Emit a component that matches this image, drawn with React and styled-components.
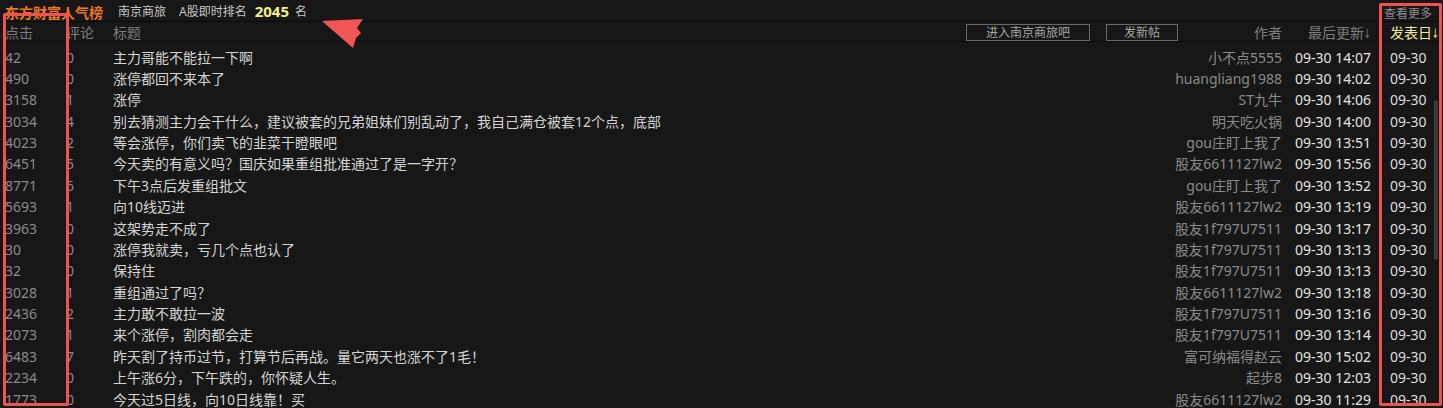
import styled, { createGlobalStyle } from 'styled-components'

const Global = createGlobalStyle`
  html, body {
    margin: 0;
    padding: 0;
    background: #171717;
  }
  body {
    font-family: "Noto Sans", "Noto Sans CJK SC", sans-serif;
    font-size: 14px;
    overflow: hidden;
  }
`

const Page = styled.div`
  position: relative;
  width: 1443px;
  height: 408px;
  overflow: hidden;
  background: #171717;
`

const TopBar = styled.div`
  display: flex;
  align-items: center;
  height: 21px;
  padding-left: 5px;
  border-bottom: 1px solid #0b0b0b;
  overflow: hidden;
  white-space: nowrap;
`

const Brand = styled.span`
  color: #ee7628;
  font-weight: 700;
  font-size: 14px;
  line-height: 14px;
  margin-top: 4px;
`

const Info = styled.span`
  color: #c6c6c6;
  font-size: 12px;
  margin-left: ${p => p.gap || 0}px;
`

const Rank = styled.span`
  color: #f3ef8c;
  font-weight: 700;
  font-size: 15px;
  margin-left: 8px;
`

const More = styled.span`
  margin-left: auto;
  margin-right: 11px;
  margin-top: 5px;
  color: #8e8e8e;
  font-size: 12px;
`

const Grid = styled.div`
  display: grid;
  grid-template-columns: 61px 47px 1fr 200px 108px 53px;
  padding-left: 5px;
  white-space: nowrap;
`

const Header = styled(Grid)`
  height: 19px;
  align-items: center;
  border-bottom: 1px solid #0b0b0b;
  color: #7d7d7d;
  font-size: 14px;
`

const HeadWide = styled.div`
  grid-column: 3 / 5;
  display: flex;
  align-items: center;
`

const Btn = styled.div`
  width: ${p => p.w}px;
  height: 15px;
  margin-left: ${p => p.gap || 0}px;
  border: 1px solid #6a6a6a;
  color: #a6a6a6;
  font-size: 12px;
  line-height: 15px;
  text-align: center;
`

const Author = styled.span`
  margin-left: 76px;
`

const SortHead = styled.div`
  text-align: right;
  padding-right: 19px;
`

const ActiveHead = styled.div`
  color: #ecea98;
`

const Down = styled.span`
  display: inline-block;
  width: 7px;
  font-family: "DejaVu Sans", sans-serif;
  font-size: 13px;
  transform: scaleX(0.6);
  transform-origin: left center;
`

const List = styled.div`
  position: relative;
  padding-top: 4.5px;
`

const Row = styled(Grid)`
  height: 21.375px;
  line-height: 21.375px;
`

const Num = styled.div`
  color: #8b8b8b;
`

const Title = styled.div`
  color: #d4d4d4;
  overflow: hidden;
`

const By = styled.div`
  color: #8a8a8a;
  text-align: right;
`

const Stamp = styled.div`
  color: #e4e4e4;
  padding-left: 13px;
`

const Day = styled.div`
  color: #dedede;
`

const Scroll = styled.div`
  position: absolute;
  right: 5px;
  top: ${p => p.top}px;
  width: 4px;
  height: ${p => p.h}px;
  background: #3a3a3a;
  border-radius: 2px;
`

const Frame = styled.div`
  position: absolute;
  left: ${p => p.x}px;
  top: ${p => p.y}px;
  width: ${p => p.w}px;
  height: ${p => p.h}px;
  border: 3px solid #f05252;
  border-radius: 2px;
  box-sizing: border-box;
  pointer-events: none;
`

const Arrow = styled.svg`
  position: absolute;
  left: 318px;
  top: 15px;
`

const rows = [
  ['42', '0', '主力哥能不能拉一下啊', '小不点5555', '09-30 14:07'],
  ['490', '0', '涨停都回不来本了', 'huangliang1988', '09-30 14:02'],
  ['3158', '1', '涨停', 'ST九牛', '09-30 14:06'],
  ['3034', '4', '别去猜测主力会干什么，建议被套的兄弟姐妹们别乱动了，我自己满仓被套12个点，底部', '明天吃火锅', '09-30 14:00'],
  ['4023', '2', '等会涨停，你们卖飞的韭菜干瞪眼吧', 'gou庄盯上我了', '09-30 13:51'],
  ['6451', '5', '今天卖的有意义吗？国庆如果重组批准通过了是一字开？', '股友6611127lw2', '09-30 15:56'],
  ['8771', '6', '下午3点后发重组批文', 'gou庄盯上我了', '09-30 13:52'],
  ['5693', '1', '向10线迈进', '股友6611127lw2', '09-30 13:19'],
  ['3963', '0', '这架势走不成了', '股友1f797U7511', '09-30 13:17'],
  ['30', '0', '涨停我就卖，亏几个点也认了', '股友1f797U7511', '09-30 13:13'],
  ['32', '0', '保持住', '股友1f797U7511', '09-30 13:13'],
  ['3028', '1', '重组通过了吗？', '股友6611127lw2', '09-30 13:18'],
  ['2436', '2', '主力敢不敢拉一波', '股友1f797U7511', '09-30 13:16'],
  ['2073', '1', '来个涨停，割肉都会走', '股友1f797U7511', '09-30 13:14'],
  ['6483', '7', '昨天割了持币过节，打算节后再战。量它两天也涨不了1毛！', '富可纳福得赵云', '09-30 15:02'],
  ['2234', '0', '上午涨6分，下午跌的，你怀疑人生。', '起步8', '09-30 12:03'],
  ['1773', '0', '今天过5日线，向10日线靠！买', '股友6611127lw2', '09-30 11:29'],
]

export default function App() {
  return (
    <Page>
      <Global />
      <TopBar>
        <Brand>东方财富人气榜</Brand>
        <Info gap={15}>南京商旅</Info>
        <Info gap={13}>A股即时排名</Info>
        <Rank>2045</Rank>
        <Info gap={6}>名</Info>
        <More>查看更多</More>
      </TopBar>
      <Header>
        <div>点击</div>
        <div>评论</div>
        <HeadWide>
          <span>标题</span>
          <Btn w={122} style={{ marginLeft: 'auto' }}>进入南京商旅吧</Btn>
          <Btn w={70} gap={16}>发新帖</Btn>
          <Author>作者</Author>
        </HeadWide>
        <SortHead>最后更新<Down>↓</Down></SortHead>
        <ActiveHead>发表日<Down>↓</Down></ActiveHead>
      </Header>
      <List>
        {rows.map((r, i) => (
          <Row key={i}>
            <Num>{r[0]}</Num>
            <Num>{r[1]}</Num>
            <Title>{r[2]}</Title>
            <By>{r[3]}</By>
            <Stamp>{r[4]}</Stamp>
            <Day>09-30</Day>
          </Row>
        ))}
        <Scroll top={58} h={160} />
      </List>
      <Frame x={3} y={13} w={66} h={393} />
      <Frame x={1379} y={3} w={63} h={403} />
      <Arrow width="50" height="40" viewBox="0 0 50 40">
        <polygon points="4,6 45,4 39,13 43,18 38,23 35,33" fill="#f25555" />
      </Arrow>
    </Page>
  )
}
